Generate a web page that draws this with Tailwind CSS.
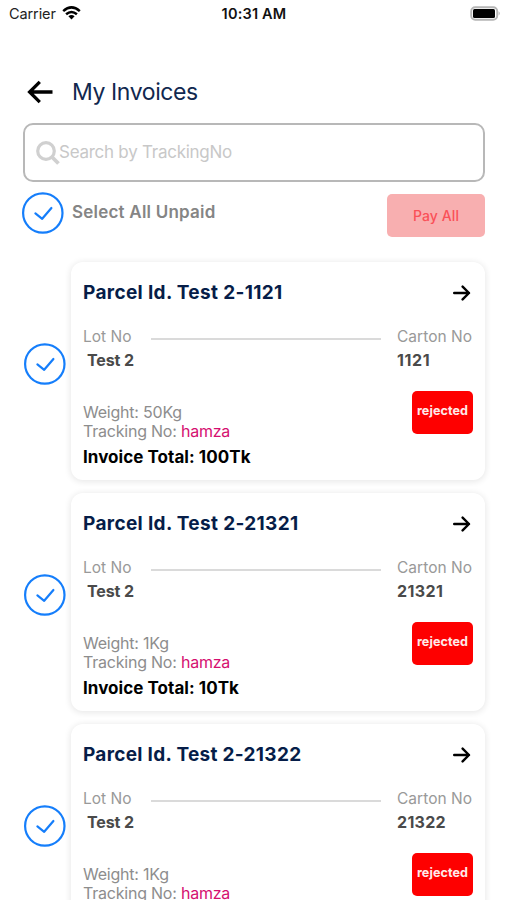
<!DOCTYPE html>
<html lang="en">
<head>
<meta charset="utf-8">
<title>My Invoices</title>
<script src="https://cdn.jsdelivr.net/npm/@tailwindcss/browser@4"></script>
</head>
<body class="bg-white">
<svg class="hidden">
  <symbol id="check" viewBox="0 0 42 42"><circle cx="20.8" cy="21" r="19.7" fill="none" stroke="#157efb" stroke-width="2.2"/><path d="M13.4 21.4 20.2 26.8 29.4 16" fill="none" stroke="#157efb" stroke-width="2.2" stroke-linecap="round" stroke-linejoin="round"/></symbol>
  <symbol id="next" viewBox="0 0 18 16"><path d="M1.2 8H16M9.6 1.6 16 8 9.6 14.4" fill="none" stroke="#000" stroke-width="2.4" stroke-linecap="round" stroke-linejoin="round"/></symbol>
</svg>
<main class="flex h-[900px] w-[507px] flex-col overflow-hidden bg-white font-['Inter',sans-serif]">
  <header class="grid h-7 shrink-0 grid-cols-3 items-center pl-[9px] pr-[6px] text-black">
    <div class="flex items-center gap-[6px]">
      <span class="text-[14.5px] tracking-[-0.1px] text-[#222]">Carrier</span>
      <svg class="mt-[-2px] h-[14px] w-[19px]" viewBox="0 0 19 14"><g fill="none" stroke="#000" stroke-width="2.5"><path d="M1.2 5.2Q9.5-2.4 17.8 5.2"/><path d="M4.1 8.3Q9.5 3.6 14.9 8.3"/></g><path d="M6.4 10.3Q9.5 7.8 12.6 10.3L9.5 13.4Z"/></svg>
    </div>
    <span class="relative left-[-1px] whitespace-nowrap text-center text-[14.5px] font-semibold tracking-[0.2px] text-[#111]">10:31 AM</span>
    <svg class="mt-[-2px] h-[15px] w-[31px] justify-self-end" viewBox="0 0 31 15"><rect x="1.2" y="1.2" width="26" height="12.6" rx="4" fill="#fff" stroke="#b5b5b5" stroke-width="1.9"/><rect x="3" y="3" width="22" height="9" rx="1.5"/><path d="M28.6 5.2Q31 7.4 28.6 9.6Z" fill="#b5b5b5"/></svg>
  </header>
  <div class="mt-[44px] flex h-10 shrink-0 items-center pl-[27px]">
    <svg class="mt-[-1px] h-[24px] w-[26px]" viewBox="0 0 26 24"><path d="M25.5 12H3M12.8 1.8 2.6 12 12.8 22.2" fill="none" stroke="#000" stroke-width="3.3"/></svg>
    <h1 class="ml-[19px] text-[23px] tracking-[-0.4px] text-[#11284f]">My Invoices</h1>
  </div>
  <div class="ml-[23px] mt-[11px] flex h-[59px] w-[462px] shrink-0 items-center rounded-[10px] border-2 border-[#b8b8b8] pl-[11px]">
    <svg class="h-6 w-6" viewBox="0 0 24 24"><circle cx="10" cy="10" r="8.3" fill="none" stroke="#d0d0d0" stroke-width="3.2"/><path d="M16 16 22.5 22.5" stroke="#d0d0d0" stroke-width="3.8"/></svg>
    <span class="-ml-px text-[17px] tracking-[-0.26px] text-[#c8c8c8]">Search by TrackingNo</span>
  </div>
  <div class="ml-[22px] mt-[12px] flex h-[43px] w-[463px] shrink-0 items-start">
    <svg class="mt-[-2px] h-[42px] w-[42px]"><use href="#check"/></svg>
    <span class="ml-2 mt-[6px] text-[17px] font-semibold leading-6 tracking-[0.22px] text-[#858585]">Select All Unpaid</span>
    <div class="ml-auto flex h-[43px] w-[98px] items-center justify-center rounded-[5px] bg-[#f8afb0] text-[14px] font-medium tracking-[0.1px] text-[#fa5158]">Pay All</div>
  </div>
  <section class="mt-[24.5px] flex flex-col gap-[13px] pl-[24px]">
    <article class="flex h-[218px] shrink-0 items-center">
      <svg class="mt-[-13px] h-[42px] w-[42px] shrink-0"><use href="#check"/></svg>
      <div class="ml-[5px] flex h-[218px] w-[414px] flex-col rounded-[12px] bg-white pl-3 pr-3 shadow-[0_1px_6px_1px_rgba(0,0,0,0.09)]">
        <div class="mt-[19.5px] flex h-6 items-center justify-between pr-[2px]">
          <h2 class="text-[19px] font-bold tracking-[0.34px] text-[#061d48]">Parcel Id. Test 2-1121</h2>
          <svg class="h-4 w-[18px]"><use href="#next"/></svg>
        </div>
        <div class="mt-[22px] flex h-5 text-[15.5px] leading-5 tracking-[0.03px] text-[#999]">
          <span class="w-[68px]">Lot No</span>
          <div class="mt-[11px] h-[2px] w-[230px] bg-[#dadada]"></div>
          <span class="ml-4 whitespace-nowrap">Carton No</span>
        </div>
        <div class="mt-[3px] flex h-5 pl-1 text-[16px] font-bold leading-5 text-[#4a4a4a]">
          <span class="w-[310px] tracking-[-0.1px]">Test 2</span><span class="tracking-[0.6px]">1121</span>
        </div>
        <div class="mt-[21px] flex justify-between">
          <div class="pt-[12px] text-[16px] leading-[19px] tracking-[-0.22px] text-[#8d8d8d]">
            <p>Weight: 50Kg</p>
            <p>Tracking No: <span class="text-[#d50f70]">hamza</span></p>
            <p class="mt-[5px] text-[17px] font-bold leading-[22px] tracking-[0.05px] text-black">Invoice Total: 100Tk</p>
          </div>
          <div class="flex h-[43px] w-[61px] justify-center rounded-[5px] bg-[#fe0000] pt-[10px] text-[12.6px] font-bold leading-5 tracking-[0.05px] text-[#ffe9e9]">rejected</div>
        </div>
      </div>
    </article>
    <article class="flex h-[218px] shrink-0 items-center">
      <svg class="mt-[-13px] h-[42px] w-[42px] shrink-0"><use href="#check"/></svg>
      <div class="ml-[5px] flex h-[218px] w-[414px] flex-col rounded-[12px] bg-white pl-3 pr-3 shadow-[0_1px_6px_1px_rgba(0,0,0,0.09)]">
        <div class="mt-[19.5px] flex h-6 items-center justify-between pr-[2px]">
          <h2 class="text-[19px] font-bold tracking-[0.34px] text-[#061d48]">Parcel Id. Test 2-21321</h2>
          <svg class="h-4 w-[18px]"><use href="#next"/></svg>
        </div>
        <div class="mt-[22px] flex h-5 text-[15.5px] leading-5 tracking-[0.03px] text-[#999]">
          <span class="w-[68px]">Lot No</span>
          <div class="mt-[11px] h-[2px] w-[230px] bg-[#dadada]"></div>
          <span class="ml-4 whitespace-nowrap">Carton No</span>
        </div>
        <div class="mt-[3px] flex h-5 pl-1 text-[16px] font-bold leading-5 text-[#4a4a4a]">
          <span class="w-[310px] tracking-[-0.1px]">Test 2</span><span class="tracking-[0.4px]">21321</span>
        </div>
        <div class="mt-[21px] flex justify-between">
          <div class="pt-[12px] text-[16px] leading-[19px] tracking-[-0.22px] text-[#8d8d8d]">
            <p>Weight: 1Kg</p>
            <p>Tracking No: <span class="text-[#d50f70]">hamza</span></p>
            <p class="mt-[5px] text-[17px] font-bold leading-[22px] tracking-[0.05px] text-black">Invoice Total: 10Tk</p>
          </div>
          <div class="flex h-[43px] w-[61px] justify-center rounded-[5px] bg-[#fe0000] pt-[10px] text-[12.6px] font-bold leading-5 tracking-[0.05px] text-[#ffe9e9]">rejected</div>
        </div>
      </div>
    </article>
    <article class="flex h-[218px] shrink-0 items-center">
      <svg class="mt-[-13px] h-[42px] w-[42px] shrink-0"><use href="#check"/></svg>
      <div class="ml-[5px] flex h-[218px] w-[414px] flex-col rounded-[12px] bg-white pl-3 pr-3 shadow-[0_1px_6px_1px_rgba(0,0,0,0.09)]">
        <div class="mt-[19.5px] flex h-6 items-center justify-between pr-[2px]">
          <h2 class="text-[19px] font-bold tracking-[0.3px] text-[#061d48]">Parcel Id. Test 2-21322</h2>
          <svg class="h-4 w-[18px]"><use href="#next"/></svg>
        </div>
        <div class="mt-[22px] flex h-5 text-[15.5px] leading-5 tracking-[0.03px] text-[#999]">
          <span class="w-[68px]">Lot No</span>
          <div class="mt-[11px] h-[2px] w-[230px] bg-[#dadada]"></div>
          <span class="ml-4 whitespace-nowrap">Carton No</span>
        </div>
        <div class="mt-[3px] flex h-5 pl-1 text-[16px] font-bold leading-5 text-[#4a4a4a]">
          <span class="w-[310px] tracking-[-0.1px]">Test 2</span><span class="tracking-[0.3px]">21322</span>
        </div>
        <div class="mt-[21px] flex justify-between">
          <div class="pt-[12px] text-[16px] leading-[19px] tracking-[-0.22px] text-[#8d8d8d]">
            <p>Weight: 1Kg</p>
            <p>Tracking No: <span class="text-[#d50f70]">hamza</span></p>
          </div>
          <div class="flex h-[43px] w-[61px] justify-center rounded-[5px] bg-[#fe0000] pt-[10px] text-[12.6px] font-bold leading-5 tracking-[0.05px] text-[#ffe9e9]">rejected</div>
        </div>
      </div>
    </article>
  </section>
</main>
</body>
</html>
